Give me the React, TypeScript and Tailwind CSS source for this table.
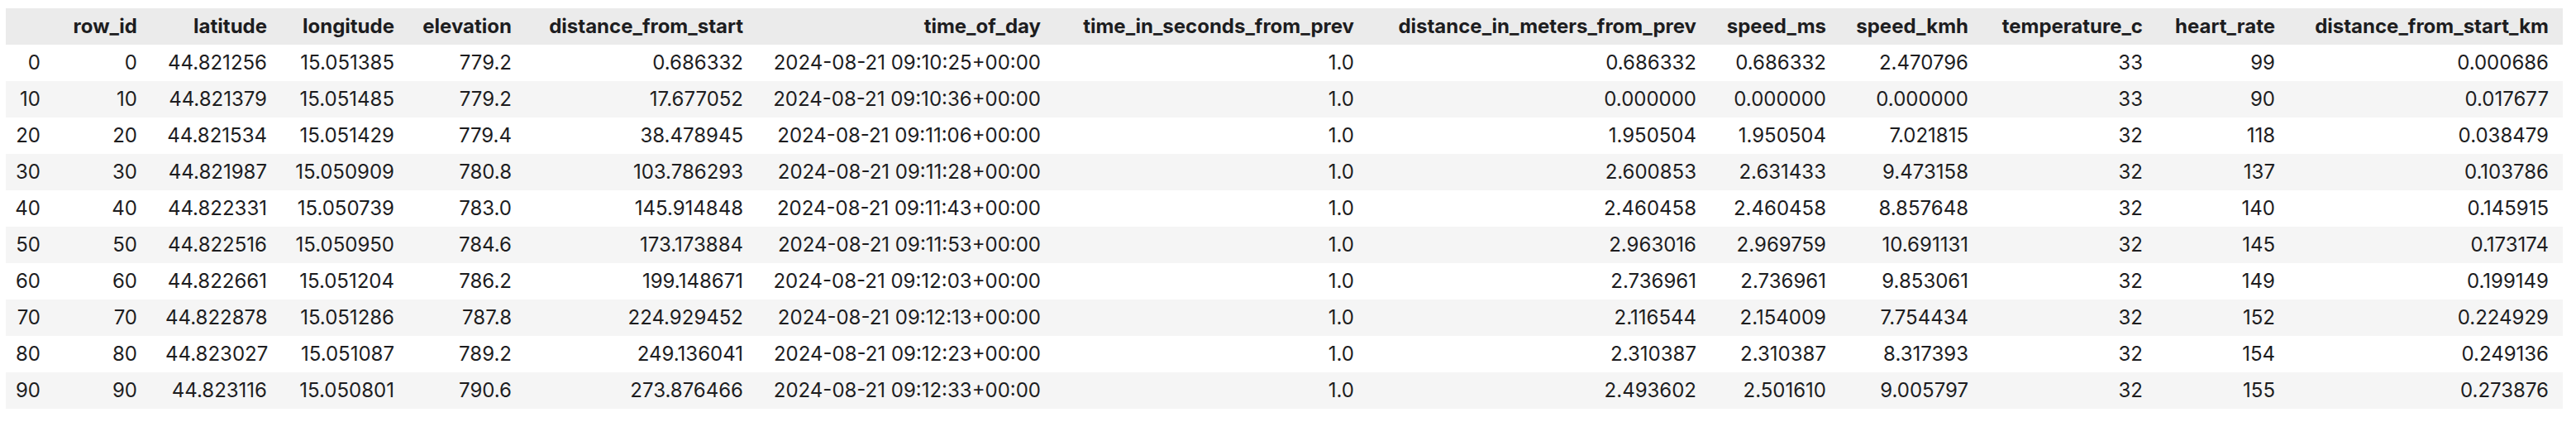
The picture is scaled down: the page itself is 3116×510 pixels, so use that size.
import React from "react";

const headers = [
  "",
  "row_id",
  "latitude",
  "longitude",
  "elevation",
  "distance_from_start",
  "time_of_day",
  "time_in_seconds_from_prev",
  "distance_in_meters_from_prev",
  "speed_ms",
  "speed_kmh",
  "temperature_c",
  "heart_rate",
  "distance_from_start_km",
];

const rows: string[][] = [
  ["0", "0", "44.821256", "15.051385", "779.2", "0.686332", "2024-08-21 09:10:25+00:00", "1.0", "0.686332", "0.686332", "2.470796", "33", "99", "0.000686"],
  ["10", "10", "44.821379", "15.051485", "779.2", "17.677052", "2024-08-21 09:10:36+00:00", "1.0", "0.000000", "0.000000", "0.000000", "33", "90", "0.017677"],
  ["20", "20", "44.821534", "15.051429", "779.4", "38.478945", "2024-08-21 09:11:06+00:00", "1.0", "1.950504", "1.950504", "7.021815", "32", "118", "0.038479"],
  ["30", "30", "44.821987", "15.050909", "780.8", "103.786293", "2024-08-21 09:11:28+00:00", "1.0", "2.600853", "2.631433", "9.473158", "32", "137", "0.103786"],
  ["40", "40", "44.822331", "15.050739", "783.0", "145.914848", "2024-08-21 09:11:43+00:00", "1.0", "2.460458", "2.460458", "8.857648", "32", "140", "0.145915"],
  ["50", "50", "44.822516", "15.050950", "784.6", "173.173884", "2024-08-21 09:11:53+00:00", "1.0", "2.963016", "2.969759", "10.691131", "32", "145", "0.173174"],
  ["60", "60", "44.822661", "15.051204", "786.2", "199.148671", "2024-08-21 09:12:03+00:00", "1.0", "2.736961", "2.736961", "9.853061", "32", "149", "0.199149"],
  ["70", "70", "44.822878", "15.051286", "787.8", "224.929452", "2024-08-21 09:12:13+00:00", "1.0", "2.116544", "2.154009", "7.754434", "32", "152", "0.224929"],
  ["80", "80", "44.823027", "15.051087", "789.2", "249.136041", "2024-08-21 09:12:23+00:00", "1.0", "2.310387", "2.310387", "8.317393", "32", "154", "0.249136"],
  ["90", "90", "44.823116", "15.050801", "790.6", "273.876466", "2024-08-21 09:12:33+00:00", "1.0", "2.493602", "2.501610", "9.005797", "32", "155", "0.273876"],
];

export default function App() {
  return (
    <div className="w-[3116px] h-[510px] bg-white pt-[10px] pl-[7px] text-[#1d1d1f] font-['Inter','Liberation_Sans',sans-serif] text-[24px]">
      <table className="table-fixed border-collapse w-[3093px]">
        <colgroup>
          <col className="w-[63px]" />
          <col className="w-[113px]" />
          <col className="w-[157px]" />
          <col className="w-[154px]" />
          <col className="w-[142px]" />
          <col className="w-[280px]" />
          <col className="w-[360px]" />
          <col className="w-[379px]" />
          <col className="w-[414px]" />
          <col className="w-[157px]" />
          <col className="w-[172px]" />
          <col className="w-[211px]" />
          <col className="w-[160px]" />
          <col className="w-[331px]" />
        </colgroup>
        <thead>
          <tr className="bg-[#ebebeb] h-[44px]">
            {headers.map((h, i) => (
              <th
                key={i}
                className={
                  i === 0
                    ? "p-0 pr-[21px] text-right font-bold whitespace-nowrap"
                    : "p-0 px-[17px] text-right font-bold whitespace-nowrap"
                }
              >
                {h}
              </th>
            ))}
          </tr>
        </thead>
        <tbody>
          {rows.map((r, ri) => (
            <tr key={ri} className="h-[44px] even:bg-[#f5f5f5] odd:bg-white">
              {r.map((c, ci) => (
                <td
                  key={ci}
                  className={
                    ci === 0
                      ? "p-0 pr-[21px] text-right whitespace-nowrap"
                      : "p-0 px-[17px] text-right whitespace-nowrap"
                  }
                >
                  {c}
                </td>
              ))}
            </tr>
          ))}
        </tbody>
      </table>
    </div>
  );
}
